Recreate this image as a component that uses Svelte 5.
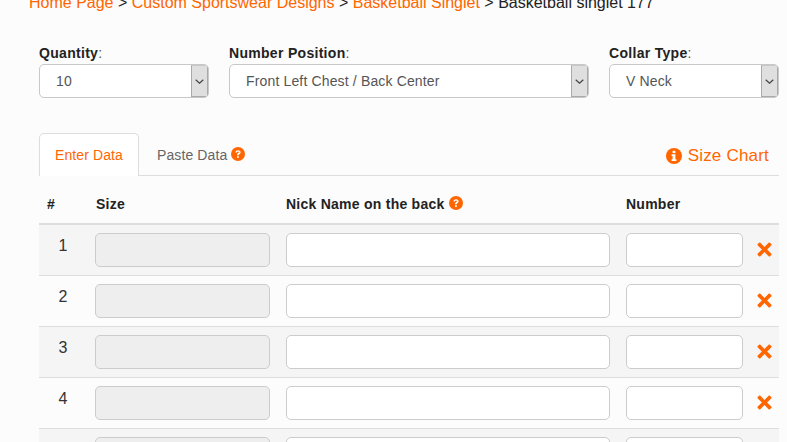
<script>
  const rows = [1, 2, 3, 4, 5];
  const selects = [
    { label: 'Quantity', value: '10', cls: 'q' },
    { label: 'Number Position', value: 'Front Left Chest / Back Center', cls: 'n' },
    { label: 'Collar Type', value: 'V Neck', cls: 'c' }
  ];
</script>

<div class="page">
  <nav class="crumbs">
    <span class="link">Home Page</span> &gt; <span class="link">Custom Sportswear Designs</span> &gt; <span class="link">Basketball Singlet</span> &gt; Basketball singlet 177
  </nav>

  <div class="filters">
    {#each selects as s}
      <div class="field {s.cls}">
        <div class="label"><b>{s.label}</b>:</div>
        <div class="select">
          <span class="val">{s.value}</span>
          <span class="arrow">
            <svg width="9" height="5" viewBox="0 0 9 5"><path d="M.7.7 4.5 4.2 8.3.7" fill="none" stroke="#444" stroke-width="1.2"/></svg>
          </span>
        </div>
      </div>
    {/each}
  </div>

  <div class="tabs">
    <div class="tab active">Enter Data</div>
    <div class="tab">Paste Data
      <svg class="q-ic" width="14" height="14" viewBox="0 0 14 14">
        <circle cx="7" cy="7" r="7" fill="#ff6600"/>
        <path d="M4.4 5.4C4.6 3.9 5.7 3.2 7 3.2c1.5 0 2.6.9 2.6 2.1 0 1-.6 1.5-1.3 2-.4.3-.6.5-.6 1H6c0-1 .3-1.5 1-2 .6-.4.9-.6.9-1 0-.4-.4-.7-.9-.7-.6 0-.9.3-1.1.9z" fill="#fff"/>
        <rect x="6" y="9.2" width="1.8" height="1.7" fill="#fff"/>
      </svg>
    </div>
    <div class="chart">
      <svg width="16" height="16" viewBox="0 0 16 16">
        <circle cx="8" cy="8" r="8" fill="#ff6600"/>
        <rect x="6.6" y="2.8" width="2.8" height="2.3" fill="#fff"/>
        <path d="M5.6 6.3h3.8v5h1v1.8H5.6v-1.8h1V8.1h-1z" fill="#fff"/>
      </svg>
      <span>Size Chart</span>
    </div>
  </div>

  <div class="head grid">
    <div class="num">#</div>
    <div>Size</div>
    <div>Nick Name on the back
      <svg class="q-ic" width="14" height="14" viewBox="0 0 14 14">
        <circle cx="7" cy="7" r="7" fill="#ff6600"/>
        <path d="M4.4 5.4C4.6 3.9 5.7 3.2 7 3.2c1.5 0 2.6.9 2.6 2.1 0 1-.6 1.5-1.3 2-.4.3-.6.5-.6 1H6c0-1 .3-1.5 1-2 .6-.4.9-.6.9-1 0-.4-.4-.7-.9-.7-.6 0-.9.3-1.1.9z" fill="#fff"/>
        <rect x="6" y="9.2" width="1.8" height="1.7" fill="#fff"/>
      </svg>
    </div>
    <div>Number</div>
  </div>

  {#each rows as r, i}
    <div class="row grid" class:odd={i % 2 === 0}>
      <div class="idx">{r}</div>
      <input class="inp size" disabled />
      <input class="inp nick" />
      <input class="inp number" />
      <svg class="del" width="15" height="15" viewBox="0 0 15 15">
        <path d="M3.4.8 7.5 4.9 11.6.8a1 1 0 0 1 1.4 0L14.2 2a1 1 0 0 1 0 1.4L10.1 7.5l4.1 4.1a1 1 0 0 1 0 1.4L13 14.2a1 1 0 0 1-1.4 0L7.5 10.1l-4.1 4.1a1 1 0 0 1-1.4 0L.8 13a1 1 0 0 1 0-1.4L4.9 7.5.8 3.4A1 1 0 0 1 .8 2L2 .8a1 1 0 0 1 1.4 0z" fill="#ff6600"/>
      </svg>
    </div>
  {/each}
</div>

<style>
  :global(body) {
    margin: 0;
    background: #fcfcfc;
    overflow: hidden;
  }
  .page {
    height: 442px;
    overflow: hidden;
    padding: 0 8px 0 39px;
    font-family: "Liberation Sans", Arial, sans-serif;
    color: #222;
  }
  .crumbs {
    margin: -6px 0 0 -10px;
    height: 72px;
    line-height: 18px;
    font-size: 16px;
    color: #222;
    white-space: nowrap;
  }
  .link { color: #ff6600; }
  .filters {
    display: flex;
    gap: 20px;
    margin-top: -21px;
    height: 88px;
    align-items: flex-start;
    width: 740px;
  }
  .field { display: flex; flex-direction: column; }
  .q, .c { width: 170px; }
  .n { width: 360px; }
  .label {
    font-size: 14px;
    line-height: 17px;
    height: 19px;
    color: #555;
    letter-spacing: 0.3px;
  }
  .label b { color: #222; }
  .select {
    box-sizing: border-box;
    height: 34px;
    display: flex;
    align-items: stretch;
    background: #fff;
    border: 1px solid #c8c8c8;
    border-radius: 5px;
    overflow: hidden;
  }
  .val {
    flex: 1;
    padding-left: 16px;
    line-height: 32px;
    font-size: 14px;
    letter-spacing: 0.15px;
    color: #555;
  }
  .arrow {
    box-sizing: border-box;
    width: 17px;
    background: #dfdfdf;
    border: 1px solid #a9a9a9;
    border-top-color: #c8c8c8;
    display: flex;
    align-items: center;
    justify-content: center;
  }
  .tabs {
    height: 42px;
    display: flex;
    align-items: stretch;
    border-bottom: 1px solid #ddd;
    width: 740px;
  }
  .tab {
    box-sizing: border-box;
    padding: 0 18px;
    line-height: 44px;
    font-size: 14px;
    letter-spacing: 0.1px;
    color: #666;
    white-space: nowrap;
  }
  .tab.active {
    width: 100px;
    height: 43px;
    color: #ff6600;
    background: #fff;
    border: 1px solid #ddd;
    border-bottom: 0;
    border-radius: 5px 5px 0 0;
    line-height: 42px;
    padding: 0 15px;
  }
  .q-ic { vertical-align: -1px; }
  .chart {
    margin-left: auto;
    display: flex;
    align-items: center;
    gap: 6px;
    padding: 4px 10px 0 0;
    color: #ff6600;
    font-size: 17px;
    letter-spacing: 0.2px;
  }
  .grid {
    display: grid;
    column-gap: 16px;
    width: 740px;
  }
  .head {
    box-sizing: border-box;
    height: 49px;
    border-bottom: 2px solid #ddd;
    align-items: center;
    font-size: 14px;
    font-weight: bold;
    letter-spacing: 0.25px;
    color: #222;
    padding-top: 9px;
    grid-template-columns: 41px 174px 324px 117px 1fr;
  }
  .head .num { padding-left: 8px; }
  .row {
    box-sizing: border-box;
    height: 51px;
    border-bottom: 1px solid #ddd;
    align-items: center;
    grid-template-columns: 40px 175px 324px 117px 1fr;
  }
  .row.odd { background: #f5f5f5; }
  .idx {
    text-align: center;
    font-size: 16px;
    color: #333;
    padding-left: 8px;
    padding-bottom: 9px;
  }
  .inp {
    box-sizing: border-box;
    height: 34px;
    width: 100%;
    border: 1px solid #ccc;
    border-radius: 5px;
    background: #fff;
    padding: 0;
    outline: none;
    margin: 0 0 1px;
  }
  .size { background: #eee; }
  .del { margin: 0 0 1px -2px; }
</style>
